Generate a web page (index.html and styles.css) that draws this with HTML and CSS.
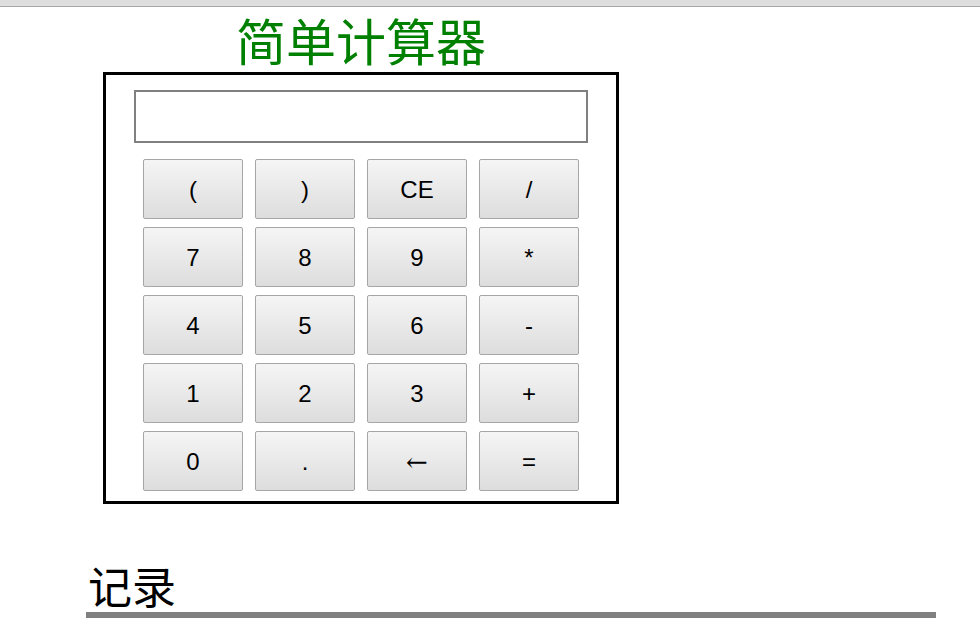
FILE: index.html
```html
<!DOCTYPE html>
<html lang="zh">
<head>
<meta charset="utf-8">
<title>简单计算器</title>
<link rel="stylesheet" href="styles.css">
</head>
<body>
<div class="topbar"></div>
<main class="page">
  <section class="calc-wrap">
    <h1 class="title">简单计算器</h1>
    <div class="calc">
      <input class="display" type="text">
      <div class="keys">
        <button class="key">(</button>
        <button class="key">)</button>
        <button class="key">CE</button>
        <button class="key">/</button>
        <button class="key">7</button>
        <button class="key">8</button>
        <button class="key">9</button>
        <button class="key">*</button>
        <button class="key">4</button>
        <button class="key">5</button>
        <button class="key">6</button>
        <button class="key">-</button>
        <button class="key">1</button>
        <button class="key">2</button>
        <button class="key">3</button>
        <button class="key">+</button>
        <button class="key">0</button>
        <button class="key">.</button>
        <button class="key arrow">←</button>
        <button class="key">=</button>
      </div>
    </div>
  </section>
  <section class="records">
    <h2 class="records-title">记录</h2>
    <div class="records-rule"></div>
  </section>
</main>
</body>
</html>
```

FILE: styles.css
```css
* { box-sizing: border-box; }
html, body { margin: 0; padding: 0; background: #fff; }
body { font-family: "Liberation Sans", Arial, "Noto Sans CJK SC", sans-serif; }

.topbar {
  height: 7px;
  background: #dedede;
  border-bottom: 1px solid #a8a8a8;
}

.page { display: flex; flex-direction: column; }

.calc-wrap {
  margin-left: 103px;
  width: 516px;
}

.title {
  margin: 0;
  height: 65px;
  line-height: 65px;
  text-align: center;
  font-family: "Noto Sans CJK SC", sans-serif;
  font-weight: 400;
  font-size: 50px;
  color: #008000;
}

.calc {
  border: 3px solid #000;
  padding: 15px 0 10px 28px;
}

.display {
  display: block;
  width: 454px;
  height: 53px;
  border: 2px solid #808080;
  margin: 0;
  padding: 0 6px;
  font-size: 24px;
  outline: none;
  background: #fff;
}

.keys {
  margin: 16px 0 0 9px;
  display: grid;
  grid-template-columns: repeat(4, 100px);
  grid-auto-rows: 60px;
  column-gap: 12px;
  row-gap: 8px;
}

.key {
  margin: 0;
  padding: 2px 0 0;
  border: 1px solid #a6a6a6;
  border-radius: 2px;
  background: linear-gradient(to bottom, #f5f5f5, #dddddd);
  font-family: "Liberation Sans", Arial, sans-serif;
  font-size: 24px;
  color: #000;
  line-height: 1;
}

.key.arrow { font-family: "DejaVu Serif", "Liberation Serif", serif; font-size: 26px; }

.records {
  margin: 61px 0 0 86px;
  width: 850px;
}

.records-title {
  margin: 0 0 0 2px;
  padding-bottom: 7px;
  line-height: 40px;
  font-family: "Noto Sans CJK SC", sans-serif;
  font-weight: 400;
  font-size: 44px;
  color: #000;
}

.records-rule {
  height: 6px;
  background: #808080;
}
```
